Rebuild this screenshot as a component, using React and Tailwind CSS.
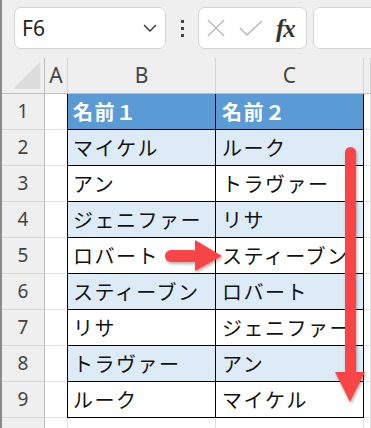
import React from "react";

const rows = [
  ["名前１", "名前２"],
  ["マイケル", "ルーク"],
  ["アン", "トラヴァー"],
  ["ジェニファー", "リサ"],
  ["ロバート", "スティーブン"],
  ["スティーブン", "ロバート"],
  ["リサ", "ジェニファー"],
  ["トラヴァー", "アン"],
  ["ルーク", "マイケル"],
];

const jp = "font-['Noto_Sans_CJK_JP','Noto_Sans',sans-serif]";

function Toolbar() {
  return (
    <div className="h-[58px] bg-[#efefef] flex items-start pt-[7px] pl-[12px]">
      <div className="shrink-0 w-[152px] h-[42px] bg-white border border-[#d5d5d5] rounded-[7px] flex items-center justify-between pl-[7px] pr-[8px]">
        <span className="text-[21px] text-[#1f1f1f] font-['Noto_Sans',sans-serif] leading-none">F6</span>
        <svg width="14" height="8" viewBox="0 0 14 8">
          <path d="M1 1 L7 7 L13 1" fill="none" stroke="#333" strokeWidth="1.4" />
        </svg>
      </div>
      <div className="shrink-0 w-[32px] h-[42px] flex flex-col items-center justify-center gap-[4px]">
        <span className="w-[3px] h-[3px] bg-[#444]" />
        <span className="w-[3px] h-[3px] bg-[#444]" />
        <span className="w-[3px] h-[3px] bg-[#444]" />
      </div>
      <div className="shrink-0 w-[109px] h-[42px] bg-white border border-[#d5d5d5] rounded-[7px] flex items-center pl-[8px] gap-[14px]">
        <svg width="18" height="18" viewBox="0 0 18 18">
          <path d="M1 1 L17 17 M17 1 L1 17" stroke="#b5b5b5" strokeWidth="1.3" fill="none" />
        </svg>
        <svg width="24" height="16" viewBox="0 0 24 16">
          <path d="M1 8 L8 15 L23 1" stroke="#b5b5b5" strokeWidth="1.3" fill="none" />
        </svg>
        <span className="text-[25px] italic font-bold font-['Liberation_Serif',serif] text-[#333] leading-none -ml-[1px] tracking-[-1px]">fx</span>
      </div>
      <div className="shrink-0 ml-[6px] w-[80px] h-[42px] bg-white border border-[#d5d5d5] rounded-[7px]" />
    </div>
  );
}

function HeaderRow() {
  return (
    <div className="h-[36px] flex bg-[#efefef] border-b border-[#bdbdbd] text-[#444] text-[21px] font-['Noto_Sans',sans-serif]">
      <div className="w-[43px] border-r border-[#bdbdbd] flex items-end justify-end pr-[3px] pb-[3px]">
        <svg width="28" height="28" viewBox="0 0 28 28">
          <path d="M27 0 L27 27 L0 27 Z" fill="#dcdcdc" />
        </svg>
      </div>
      <div className="w-[23px] border-r border-[#d4d4d4] flex items-center justify-center">A</div>
      <div className="w-[148px] border-r border-[#d4d4d4] flex items-center justify-center">B</div>
      <div className="w-[148px] border-r border-[#d4d4d4] flex items-center justify-center">C</div>
      <div className="w-[7px] border-r border-[#d4d4d4]" />
    </div>
  );
}

function DataRow({ n, b, c }) {
  const head = n === 1;
  const band = n % 2 === 0;
  const cellBg = head ? "bg-[#5b9bd5] text-white font-bold" : band ? "bg-[#ddebf7] text-[#111]" : "bg-white text-[#111]";
  return (
    <div className="h-[36px] flex">
      <div className="w-[43px] bg-[#efefef] border-r border-[#bdbdbd] border-b border-b-[#d4d4d4] flex items-center justify-center text-[19px] text-[#444] font-['Noto_Sans',sans-serif]">
        {n}
      </div>
      <div className="w-[22px] bg-white border-b border-[#e1e1e1]" />
      <div className={`w-[148px] border-l border-b border-black flex items-center pl-[5px] overflow-hidden whitespace-nowrap text-[20px] tracking-[1.5px] ${jp} ${cellBg}`}>
        {b}
      </div>
      <div className={`w-[149px] border-l border-r border-b border-black flex items-center pl-[6px] overflow-hidden whitespace-nowrap text-[20px] tracking-[1.5px] ${jp} ${cellBg}`}>
        {c}
      </div>
      <div className="w-[7px] bg-white border-r border-b border-[#e1e1e1]" />
    </div>
  );
}

function Arrows() {
  return (
    <svg className="absolute left-0 top-0 pointer-events-none" width="371" height="428" viewBox="0 0 371 428">
      <defs>
        <filter id="sh" x="-20%" y="-20%" width="140%" height="140%">
          <feDropShadow dx="1" dy="2" stdDeviation="1.5" floodColor="#000" floodOpacity="0.3" />
        </filter>
      </defs>
      <g fill="#fa4447" filter="url(#sh)">
        <rect x="165" y="250" width="34" height="12" rx="6" />
        <polygon points="195,240 222,256 195,271" />
        <rect x="345" y="147" width="11" height="230" rx="5.5" />
        <polygon points="335,372 365,372 350,402" />
      </g>
    </svg>
  );
}

export default function App() {
  return (
    <div className="relative w-[371px] h-[428px] overflow-hidden bg-white">
      <div className="h-full border-l-2 border-[#8a8a8a]">
        <Toolbar />
        <HeaderRow />
        {rows.map((r, i) => (
          <DataRow key={i} n={i + 1} b={r[0]} c={r[1]} />
        ))}
        <div className="h-[36px] flex">
          <div className="w-[43px] bg-[#efefef] border-r border-[#bdbdbd]" />
          <div className="w-[22px]" />
          <div className="w-[148px] border-l border-[#e1e1e1]" />
          <div className="w-[149px] border-l border-r border-[#e1e1e1]" />
          <div className="w-[7px] border-r border-[#e1e1e1]" />
        </div>
      </div>
      <Arrows />
    </div>
  );
}
